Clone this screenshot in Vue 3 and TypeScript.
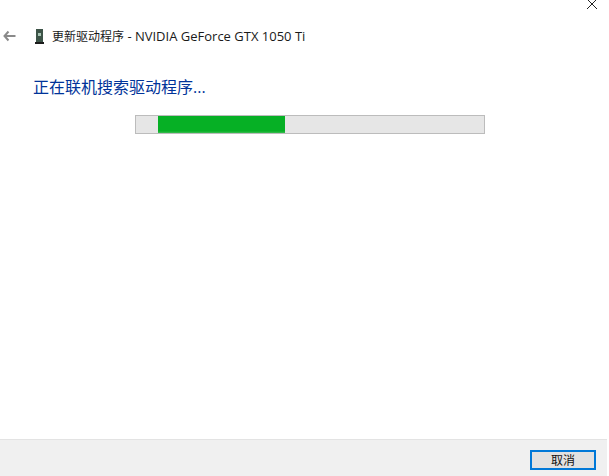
<script setup lang="ts">
const titleCjk = '更新驱动程序'
const titleLatin = ' - NVIDIA GeForce GTX 1050 Ti'
const heading = '正在联机搜索驱动程序...'
const progress = { offset: 22, width: 127 }
</script>

<template>
  <div class="window">
    <svg class="close" width="12" height="10" viewBox="0 0 12 10" aria-hidden="true">
      <path d="M1 -1L11 9M11 -1L1 9" stroke="#222" stroke-width="1" fill="none" />
    </svg>
    <main class="content">
      <header class="title-row">
        <svg class="back" width="14" height="12" viewBox="0 0 14 12" aria-hidden="true">
          <path d="M5.5 1.5L1.5 6L5.5 10.5M1.5 6H12.5" stroke="#8a8a8a" stroke-width="2" fill="none" />
        </svg>
        <svg class="device" width="9" height="15" viewBox="0 0 9 15" aria-hidden="true">
          <rect x="1" y="0" width="7" height="13" fill="#3d5448" />
          <rect x="3" y="4" width="3" height="3" fill="#a8c4b4" />
          <rect x="0" y="13" width="9" height="2" fill="#1c1c1c" />
        </svg>
        <span class="title">{{ titleCjk }}<span class="title-latin">{{ titleLatin }}</span></span>
      </header>
      <h1 class="heading">{{ heading }}</h1>
      <div class="progress">
        <div
          class="bar"
          :style="{ marginLeft: progress.offset + 'px', width: progress.width + 'px' }"
        ></div>
      </div>
    </main>
    <footer class="footer">
      <button class="cancel" type="button">取消</button>
    </footer>
  </div>
</template>

<style scoped>
.window {
  position: relative;
  width: 607px;
  height: 476px;
  display: flex;
  flex-direction: column;
  background: #fff;
  font-family: "Open Sans", "Noto Sans CJK SC", sans-serif;
  overflow: hidden;
}
.close {
  position: absolute;
  top: 0;
  left: 586px;
}
.content {
  flex: 1;
  padding: 28px 0 0 3px;
}
.title-row {
  display: flex;
  align-items: center;
  height: 16px;
}
.back {
  margin-right: 18px;
}
.device {
  margin-right: 8px;
}
.title {
  font-size: 12px;
  line-height: 16px;
  color: #1a1a1a;
  white-space: pre;
}
.title-latin {
  font-size: 13px;
}
.heading {
  margin: 31px 0 0 30px;
  font-size: 16px;
  line-height: 24px;
  font-weight: 400;
  color: #003399;
  white-space: nowrap;
}
.progress {
  box-sizing: border-box;
  display: flex;
  width: 350px;
  height: 19px;
  margin: 16px 0 0 132px;
  border: 1px solid #bcbcbc;
  background: #e6e6e6;
}
.bar {
  height: 17px;
  background: linear-gradient(#06b025 0 15px, #3cbc52 17px);
}
.footer {
  box-sizing: border-box;
  display: flex;
  justify-content: flex-end;
  height: 37px;
  padding: 10px 11px 0 0;
  background: #f0f0f0;
  border-top: 1px solid #e3e3e3;
}
.cancel {
  box-sizing: border-box;
  width: 66px;
  height: 20px;
  padding: 0;
  border: 2px solid #0078d7;
  background: #e1e1e1;
  color: #111;
  font-family: "Noto Sans CJK SC", sans-serif;
  font-size: 12px;
  line-height: 16px;
}
</style>
